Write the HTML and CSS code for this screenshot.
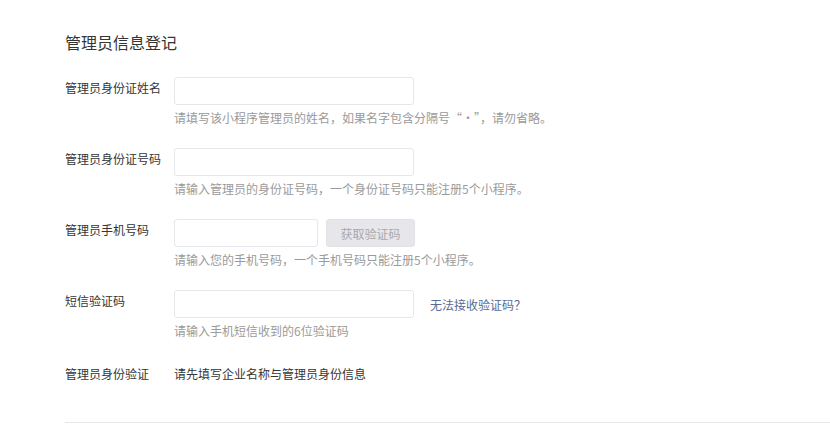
FILE: index.html
```html
<!DOCTYPE html>
<html lang="zh">
<head>
<meta charset="utf-8">
<title>管理员信息登记</title>
<link rel="stylesheet" href="styles.css">
</head>
<body>
<div class="page">
  <h2 class="title">管理员信息登记</h2>
  <div class="form">
    <div class="row">
      <label class="label">管理员身份证姓名</label>
      <div class="field">
        <div class="controls"><input class="input" type="text"></div>
        <p class="hint">请填写该小程序管理员的姓名，如果名字包含分隔号“·”，请勿省略。</p>
      </div>
    </div>
    <div class="row">
      <label class="label">管理员身份证号码</label>
      <div class="field">
        <div class="controls"><input class="input" type="text"></div>
        <p class="hint">请输入管理员的身份证号码，一个身份证号码只能注册5个小程序。</p>
      </div>
    </div>
    <div class="row">
      <label class="label">管理员手机号码</label>
      <div class="field">
        <div class="controls"><input class="input input-short" type="text"><button class="btn" type="button">获取验证码</button></div>
        <p class="hint">请输入您的手机号码，一个手机号码只能注册5个小程序。</p>
      </div>
    </div>
    <div class="row">
      <label class="label">短信验证码</label>
      <div class="field">
        <div class="controls"><input class="input" type="text"><a class="link" href="#">无法接收验证码？</a></div>
        <p class="hint">请输入手机短信收到的6位验证码</p>
      </div>
    </div>
    <div class="row row-static">
      <label class="label">管理员身份验证</label>
      <div class="value">请先填写企业名称与管理员身份信息</div>
    </div>
  </div>
  <div class="divider"></div>
</div>
</body>
</html>
```
FILE: styles.css
```css
* { box-sizing: border-box; }
html, body { margin: 0; padding: 0; background: #fff; }
body {
  font-family: "Microsoft YaHei", "Noto Sans CJK SC", "Noto Sans", sans-serif;
  color: #353535;
  font-size: 12px;
}
.page {
  padding: 26px 0 0 65px;
}
.title {
  margin: 0;
  font-size: 16px;
  font-weight: normal;
  line-height: 32px;
  color: #353535;
}
.form {
  margin-top: 19px;
}
.row {
  display: flex;
  margin-bottom: 20px;
}
.label {
  width: 109px;
  flex: none;
  line-height: 22px;
  color: #353535;
}
.field {
  display: flex;
  flex-direction: column;
}
.controls {
  display: flex;
  align-items: center;
  height: 28px;
}
.input {
  width: 240px;
  height: 28px;
  border: 1px solid #e7e7eb;
  border-radius: 3px;
  padding: 0 8px;
  font: inherit;
  outline: none;
  background: #fff;
  margin: 0;
}
.input-short {
  width: 144px;
}
.btn {
  margin-left: 8px;
  width: 89px;
  height: 28px;
  border: 1px solid #e2e2e6;
  border-radius: 3px;
  background: #e7e7eb;
  color: #a8a8ad;
  font: inherit;
  font-size: 12px;
  padding: 0;
}
.link {
  margin-left: 16px;
  color: #576b95;
  text-decoration: none;
}
.hint {
  margin: 3px 0 0;
  line-height: 20px;
  color: #9a9a9a;
}
.row-static {
  margin-top: 22px;
  margin-bottom: 0;
}
.value {
  line-height: 22px;
  color: #353535;
}
.divider {
  margin-top: 37px;
  height: 1px;
  background: #e7e7eb;
}
```
